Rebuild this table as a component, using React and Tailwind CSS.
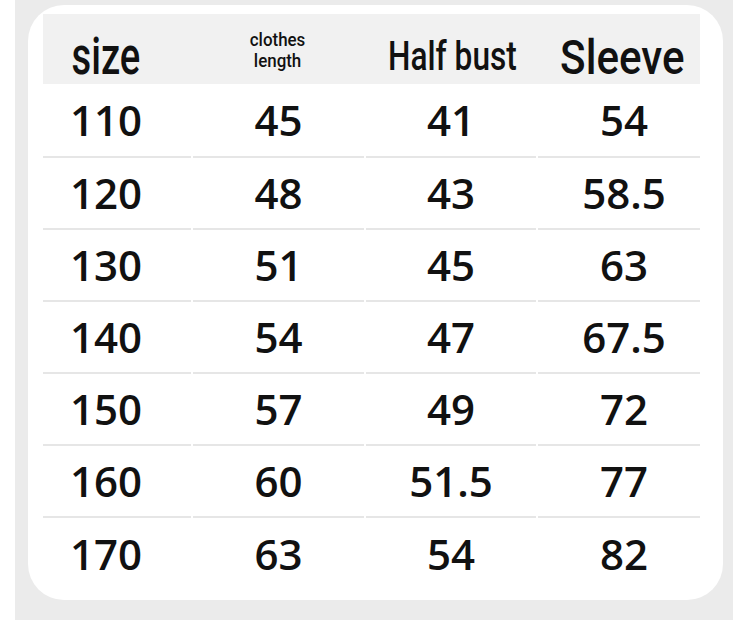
const rows = [
  ['110', '45', '41', '54'],
  ['120', '48', '43', '58.5'],
  ['130', '51', '45', '63'],
  ['140', '54', '47', '67.5'],
  ['150', '57', '49', '72'],
  ['160', '60', '51.5', '77'],
  ['170', '63', '54', '82'],
];

function HeaderRow() {
  return (
    <div className="grid grid-cols-[148px_173px_172px_164px] h-[70px] bg-[#f1f1f1] font-['Roboto',sans-serif] font-medium text-[#111]">
      <div className="flex items-end justify-center pr-[22px] pb-[2px]">
        <span className="text-[51px] leading-none scale-x-[0.75]">size</span>
      </div>
      <div className="flex items-end justify-center pb-[13px]">
        <span className="text-[18px] leading-[21px] text-center scale-x-[0.94]">
          clothes
          <br />
          length
        </span>
      </div>
      <div className="flex items-end justify-center pl-[4px] pb-[7px]">
        <span className="text-[40px] leading-none whitespace-nowrap scale-x-[0.79]">Half bust</span>
      </div>
      <div className="flex items-end justify-center pl-[8px] pb-[2px]">
        <span className="text-[49px] leading-none scale-x-[0.86]">Sleeve</span>
      </div>
    </div>
  );
}

export default function App() {
  return (
    <div className="w-[750px] h-[620px] bg-white">
      <div className="ml-[15px] w-[718px] h-[620px] bg-[#ebebeb] pt-[5px] pl-[13px]">
        <div className="w-[695px] h-[595px] bg-white rounded-[36px] pt-[9px] pl-[15px]">
          <div className="w-[657px]">
            <HeaderRow />

            {/* Size rows */}
            {rows.map((row, i) => (
              <div key={row[0]} className="grid grid-cols-[148px_171px_170px_162px] gap-x-[2px]">
                {row.map((cell, j) => (
                  <div
                    key={j}
                    className={`flex items-center justify-center font-['Open_Sans',sans-serif] font-semibold text-[42px] leading-none text-[#111] ${
                      i === 0 ? 'h-[74px]' : 'h-[72px]'
                    } ${i < rows.length - 1 ? 'border-b-2 border-[#e6e6e6]' : ''} ${
                      j === 0 ? 'pr-[22px]' : ''
                    } ${j === 3 ? 'pl-[10px]' : ''}`}
                  >
                    {cell}
                  </div>
                ))}
              </div>
            ))}
          </div>
        </div>
      </div>
    </div>
  );
}
